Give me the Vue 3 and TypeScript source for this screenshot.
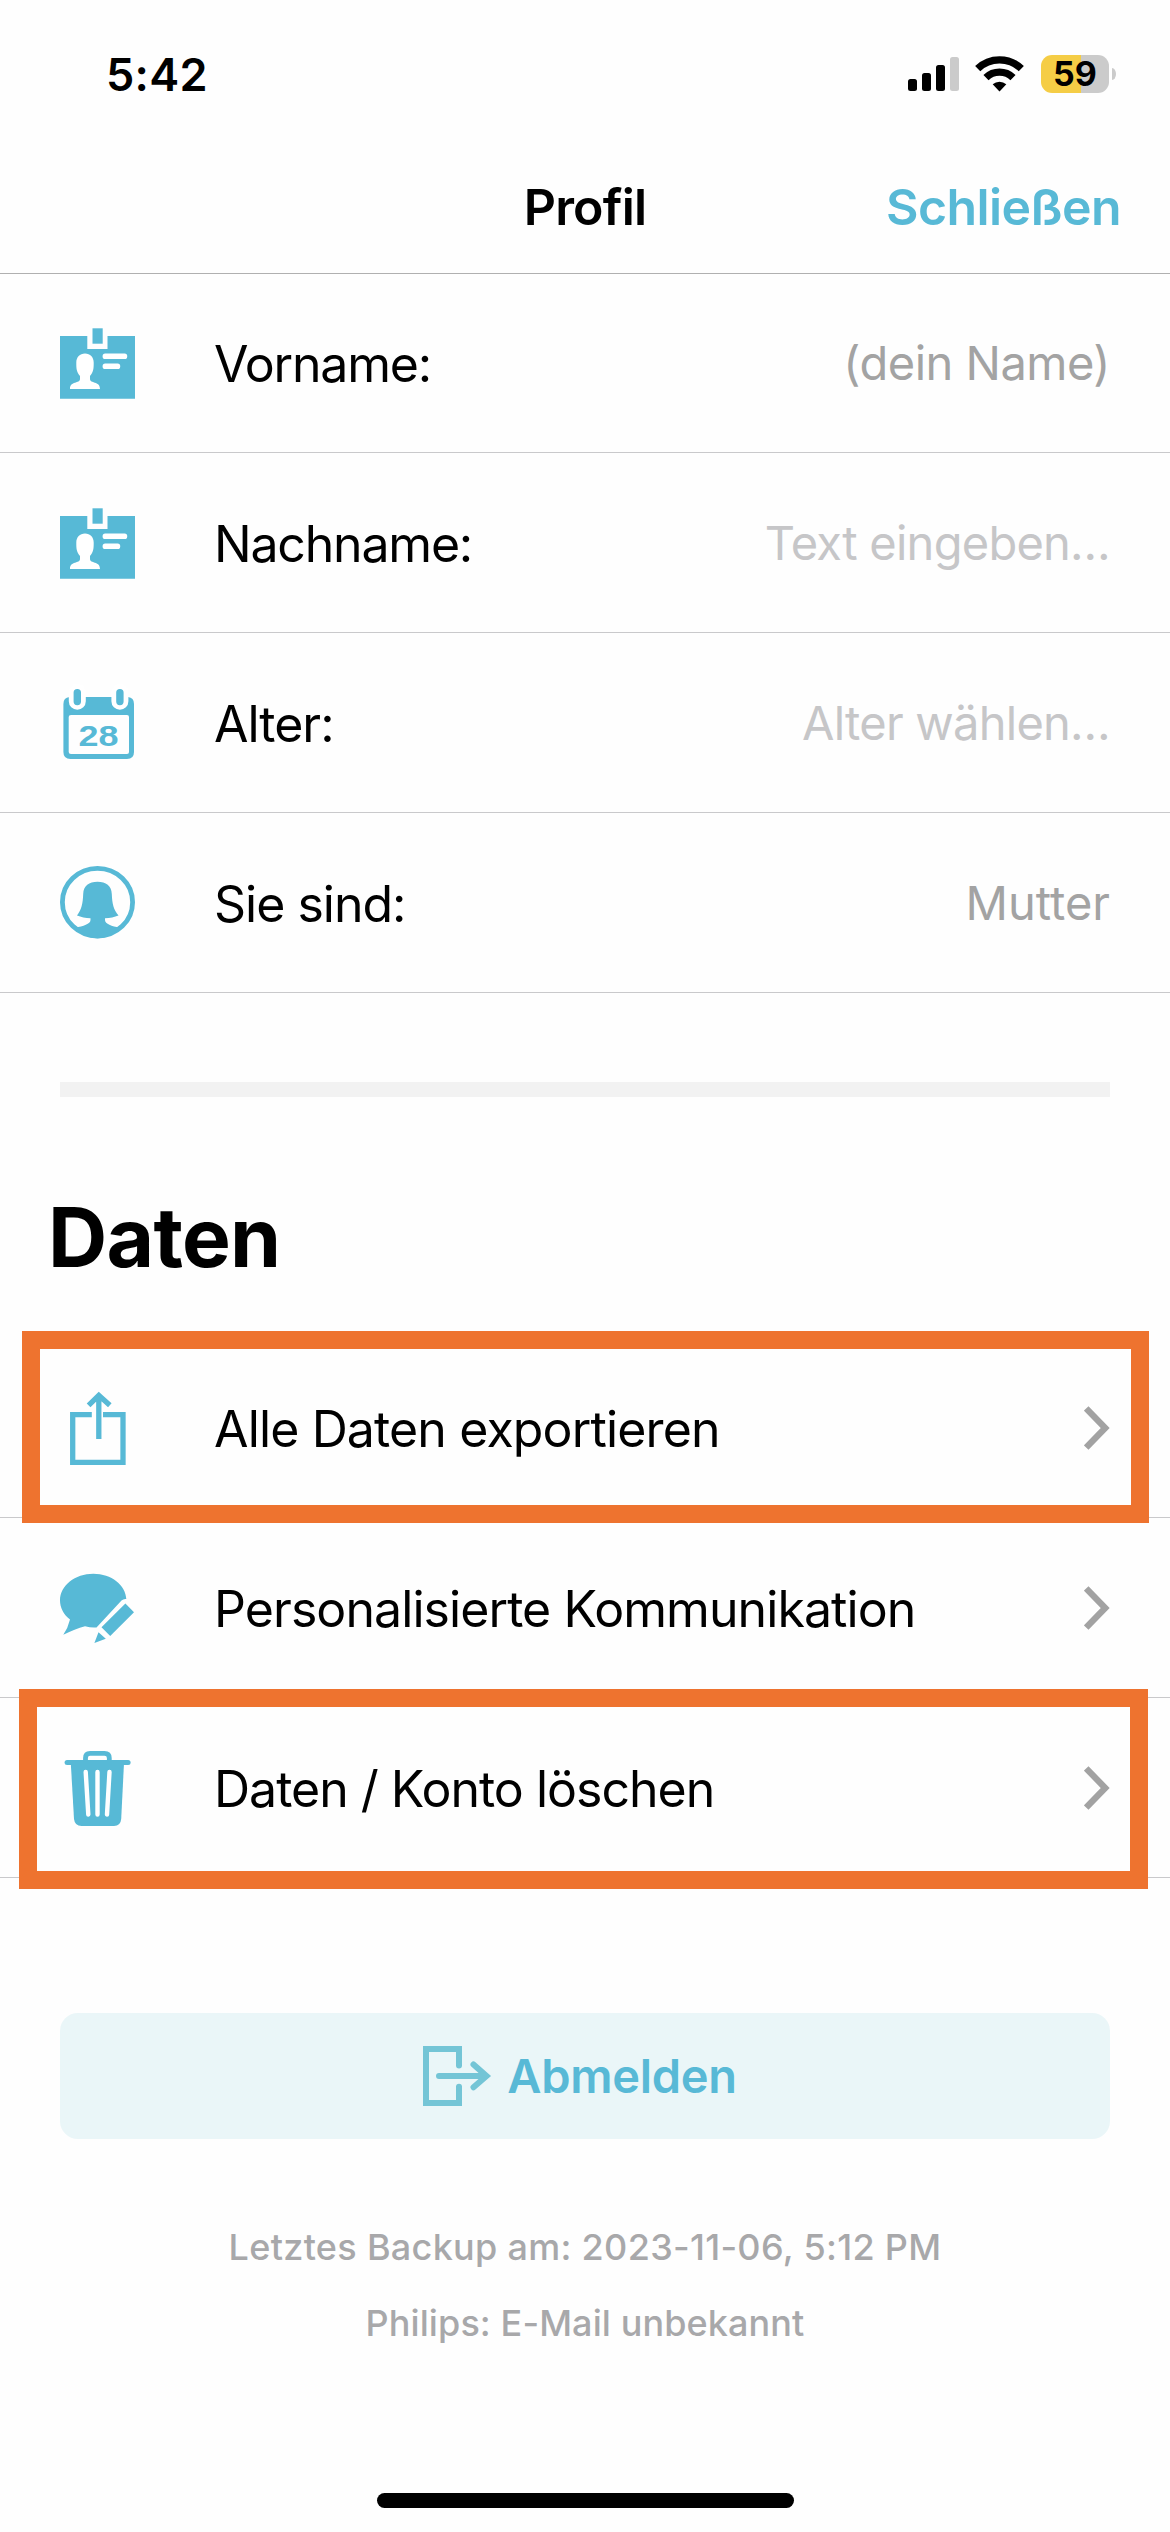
<script setup lang="ts">
type IconName = 'badge' | 'calendar' | 'mother' | 'share' | 'chat' | 'trash'

interface Field {
  icon: IconName
  label: string
  value: string
  placeholder: boolean
  fit: string
}

interface Action {
  icon: IconName
  label: string
  frame: string
  fit: string
}

const fields: Field[] = [
  { icon: 'badge', label: 'Vorname:', value: '(dein Name)', placeholder: false, fit: 'f-first' },
  { icon: 'badge', label: 'Nachname:', value: 'Text eingeben…', placeholder: true, fit: 'f-last' },
  { icon: 'calendar', label: 'Alter:', value: 'Alter wählen…', placeholder: true, fit: 'f-age' },
  { icon: 'mother', label: 'Sie sind:', value: 'Mutter', placeholder: false, fit: 'f-role' },
]

const actions: Action[] = [
  { icon: 'share', label: 'Alle Daten exportieren', frame: 'frame-export', fit: 'a-export' },
  { icon: 'chat', label: 'Personalisierte Kommunikation', frame: '', fit: 'a-comm' },
  { icon: 'trash', label: 'Daten / Konto löschen', frame: 'frame-delete', fit: 'a-delete' },
]
</script>

<template>
  <svg class="defs" width="0" height="0" aria-hidden="true">
    <symbol id="badge" viewBox="0 0 80 90">
      <path fill="currentColor" d="M0 18H27.3V31H47.5V18H75V80.7H0Z" />
      <rect x="32.5" y="10.3" width="10.2" height="15.4" fill="currentColor" />
      <rect x="42.6" y="35.6" width="24.6" height="5.4" rx="2.6" fill="#fff" />
      <rect x="42.6" y="45.6" width="17.6" height="5.4" rx="2.6" fill="#fff" />
      <path fill="#fff" d="M25 35.5C30.2 35.5 33.7 39.3 33.7 44.5C33.7 51 33.5 53.5 30 58V61C30 66 40 62.5 40 71H10C10 62.500 20 66 20 61V58C16.500 53.500 16.300 51 16.300 44.500C16.300 39.300 19.800 35.500 25 35.500Z" />
    </symbol>
    <symbol id="calendar" viewBox="0 0 80 90">
      <path fill="currentColor" fill-rule="evenodd" d="M9.500 19H68Q74 19.500 74 26V74Q74 81 67 81H10.500Q3.400 81 3.400 74V26Q3.400 19.500 9.500 19ZM11 37Q8.700 37 8.700 39V74Q8.700 76 11 76H67Q69 76 69 74V39Q69 37 67 37Z" />
      <path stroke="#fff" stroke-width="17" stroke-linecap="round" d="M17.300 14V23.300M59.900 14V23.300" />
      <path stroke="currentColor" stroke-width="7.400" stroke-linecap="round" d="M17.300 14.600V23.500M59.900 14.600V23.500" />
    </symbol>
    <symbol id="mother" viewBox="0 0 80 90">
      <ellipse cx="37.500" cy="44.200" rx="35.100" ry="33.800" fill="none" stroke="currentColor" stroke-width="4.800" />
      <path fill="currentColor" d="M37.500 23.700C46 23.700 51.500 27.500 51.800 36C52.200 46 53.500 51.500 58.500 57.500C54.500 59.200 50 60 45 60.200V62C45 66 52 68.500 59.500 69.300C54 76 46 80.300 37.500 80.300C29 80.300 21 76 15.500 69.300C23 68.500 30.500 66 30.500 62V60.200C25.500 60 21 59.200 17 57.500C21.500 51.500 22.800 46 23.200 36C23.500 27.500 29 23.700 37.500 23.700Z" />
    </symbol>
    <symbol id="share" viewBox="0 0 80 90">
      <path fill="none" stroke="currentColor" stroke-width="5.300" d="M31.800 31.700H12.700V79.300H63V31.700H43M38.800 56V13M28.600 22.300L38.800 12.300L49.800 22.300" />
    </symbol>
    <symbol id="chat" viewBox="0 0 80 90">
      <path fill="currentColor" d="M33.300 10.700C51.500 10.700 65.700 22 66.300 36Q63.500 35.600 61.500 37.500L36.500 64.500Q31 65 25 63.200Q15 66 3.300 71.700Q8 65 10 56.500C3.500 51.500 0 44.500 0 37.500C0 22.500 15 10.700 33.300 10.700Z" />
      <path fill="currentColor" d="M65.400 40.500L74 49.300L50.200 73L41.500 64.300ZM38.500 69.200L45.800 75.700L34.400 80Z" />
    </symbol>
    <symbol id="trash" viewBox="0 0 80 90">
      <path fill="none" stroke="currentColor" stroke-width="4.800" d="M25.500 20V15Q25.500 10.400 30 10.400H44.500Q49.300 10.400 49.300 15V20" />
      <rect x="4.600" y="17" width="66" height="5" rx="2.500" fill="currentColor" />
      <path fill="currentColor" d="M10.800 20H64L61.200 76Q60.500 83 54 83H21.500Q14.800 83 14 76Z" />
      <path stroke="#fff" stroke-width="4.400" stroke-linecap="round" d="M25.700 29L28.300 71.500M37.500 29V71.500M49.500 29L47 71.500" />
    </symbol>
  </svg>

  <main class="screen">
    <header class="top">
      <div class="status">
        <span class="time">5:42</span>
        <div class="indicators">
          <svg class="signal" width="52" height="38" viewBox="0 0 52 38">
            <rect x="0" y="24" width="9" height="12" rx="2.500" />
            <rect x="14" y="18" width="9" height="18" rx="2.500" />
            <rect x="28" y="10" width="9" height="26" rx="2.500" />
            <rect x="42" y="2" width="9" height="34" rx="2.500" fill="#cbcbcb" />
          </svg>
          <svg class="wifi" width="50" height="38" viewBox="0 0 50 38">
            <path fill="none" stroke="#000" stroke-width="7.400" d="M2.700 13.600A31.500 31.500 0 0 1 46.300 13.600M11 22.600A19.500 19.500 0 0 1 38 22.600" />
            <path d="M24.500 36.400L17.700 29.300A10.500 10.500 0 0 1 31.300 29.300Z" />
          </svg>
          <div class="battery"><span>59</span></div>
          <i class="cap"></i>
        </div>
      </div>
      <div class="nav">
        <h1>Profil</h1>
        <a class="close">Schließen</a>
      </div>
    </header>

    <section>
      <div v-for="f in fields" :key="f.label" class="row" :class="f.fit">
        <svg class="icon" width="80" height="90">
          <use :href="'#' + f.icon" />
          <text v-if="f.icon === 'calendar'" x="38.500" y="68" class="cal-num" text-anchor="middle" textLength="40" lengthAdjust="spacingAndGlyphs">28</text>
        </svg>
        <span class="label">{{ f.label }}</span>
        <span class="value" :class="{ placeholder: f.placeholder }">{{ f.value }}</span>
      </div>
    </section>

    <div class="divider"></div>
    <h2>Daten</h2>

    <section>
      <div v-for="a in actions" :key="a.label" class="row" :class="a.fit">
        <svg class="icon" width="80" height="90"><use :href="'#' + a.icon" /></svg>
        <span class="label">{{ a.label }}</span>
        <svg class="chevron" width="26" height="44" viewBox="0 0 26 44">
          <path fill="none" stroke="#a2a2a2" stroke-width="6.400" d="M2.200 2.400L21.200 22L2.200 41.600" />
        </svg>
        <div v-if="a.frame" class="frame" :class="a.frame"></div>
      </div>
    </section>

    <button class="logout">
      <svg width="69" height="60" viewBox="0 0 69 60" fill="none" stroke="#74c5d6">
        <path stroke-width="6" d="M36 20V3H3V57H36V40" />
        <path stroke-width="6" stroke-linecap="round" d="M36 18V19.600M36 40.700V42M16 30H60M50.500 18.500L63.500 30L50.500 41.200" />
      </svg>
      <span>Abmelden</span>
    </button>

    <footer>
      <p class="backup">Letztes Backup am: 2023-11-06, 5:12 PM</p>
      <p class="mail">Philips: E-Mail unbekannt</p>
    </footer>
    <div class="home"></div>
  </main>
</template>

<style>
body {
  background: #fff;
}
</style>

<style scoped>
.defs {
  position: absolute;
}
.screen {
  box-sizing: border-box;
  width: 1170px;
  height: 2532px;
  overflow: hidden;
  display: flex;
  flex-direction: column;
  background: #fefefe;
  color: #000;
  font-family: Inter, "Liberation Sans", sans-serif;
  white-space: nowrap;
}
h1, h2, p {
  margin: 0;
}
.top {
  height: 273px;
  box-shadow: 0 1px 0 #b0b0b0;
}
.status {
  display: flex;
  justify-content: space-between;
  height: 148px;
  padding: 0 54px 0 106px;
  box-sizing: border-box;
  align-items: center;
}
.time {
  font-size: 45px;
  font-weight: 600;
  letter-spacing: 0.3px;
}
.indicators {
  display: flex;
  align-items: center;
}
.wifi {
  margin: 0 16px 0 15px;
}
.battery {
  width: 68px;
  height: 38px;
  border-radius: 11px;
  background: linear-gradient(90deg, #f5cd46 40px, #cbcbcb 40px);
  display: flex;
  align-items: center;
  justify-content: center;
}
.battery span {
  font-size: 34px;
  line-height: 38px;
  font-weight: 700;
}
.cap {
  width: 4px;
  height: 12px;
  margin-left: 3px;
  border-radius: 0 4px 4px 0 / 0 6px 6px 0;
  background: #cbcbcb;
}
.nav {
  display: grid;
  grid-template-columns: 1fr auto 1fr;
  align-items: center;
  height: 118px;
  padding: 0 49px;
}
h1 {
  grid-column: 2;
  font-size: 50px;
  line-height: 60px;
  font-weight: 600;
  letter-spacing: -0.8px;
}
.close {
  justify-self: end;
  font-size: 50px;
  line-height: 60px;
  font-weight: 600;
  letter-spacing: -0.6px;
  color: #58b9d6;
}
.row {
  position: relative;
  box-sizing: border-box;
  height: 180px;
  padding: 0 60px;
  border-bottom: 1px solid #c9c9cb;
  display: flex;
  align-items: center;
}
.icon {
  width: 80px;
  height: 90px;
  margin-right: 74px;
  color: #57b9d6;
}
.cal-num {
  font: 700 30px "Liberation Sans", Arial, sans-serif;
  fill: currentColor;
}
.label {
  flex: 1;
  font-size: 50px;
  line-height: 60px;
  padding-top: 3px;
  letter-spacing: -1px;
}
.f-first .label,
.f-last .label {
  letter-spacing: -1.2px;
}
.a-export .label {
  letter-spacing: -0.86px;
}
.a-comm .label {
  letter-spacing: -0.92px;
}
.value {
  font-size: 47px;
  line-height: 60px;
  letter-spacing: -0.5px;
  color: #a3a3a3;
}
.value.placeholder {
  letter-spacing: -0.74px;
  color: #c6c6c8;
}
.f-role .value {
  letter-spacing: 0;
}
.frame {
  position: absolute;
  box-sizing: border-box;
  z-index: 1;
  border: 18px solid #ee732f;
}
.frame-export {
  left: 22px;
  top: -7px;
  width: 1127px;
  height: 192px;
}
.frame-delete {
  left: 19px;
  top: -9px;
  width: 1129px;
  height: 200px;
}
.divider {
  height: 15px;
  margin: 89px 60px 0;
  background: #f2f2f2;
}
h2 {
  height: 241px;
  box-sizing: border-box;
  padding: 91px 0 0 48px;
  font-size: 82px;
  line-height: 100px;
  font-weight: 700;
  letter-spacing: -0.7px;
}
.logout {
  flex: none;
  margin: 135px 60px 0;
  height: 126px;
  padding: 0 10px 0 0;
  border: 0;
  border-radius: 18px;
  background: #eaf6f8;
  display: flex;
  align-items: center;
  justify-content: center;
  gap: 15px;
  font: 600 47px/60px Inter, "Liberation Sans", sans-serif;
  letter-spacing: -0.3px;
  color: #58b9d6;
}
footer {
  margin-top: 70px;
  text-align: center;
  font-size: 36px;
  line-height: 76px;
  font-weight: 500;
  color: #a8a8aa;
}
.backup {
  letter-spacing: 0.3px;
}
.mail {
  letter-spacing: 0.1px;
}
.home {
  width: 417px;
  height: 15px;
  margin: auto auto 24px;
  border-radius: 8px;
  background: #000;
}
</style>
